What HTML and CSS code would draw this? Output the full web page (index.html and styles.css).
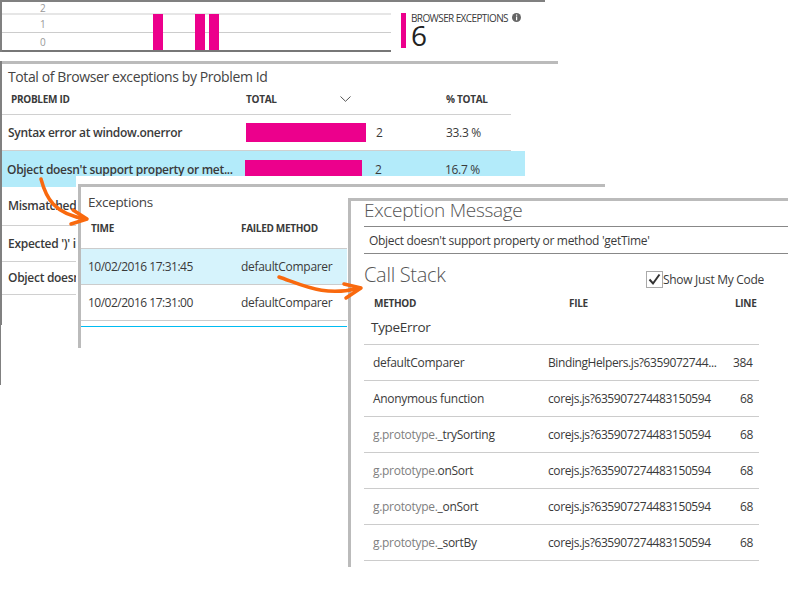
FILE: index.html
```html
<!DOCTYPE html>
<html>
    <head>
        <meta http-equiv=Content-Type content=text/html;charset=UTF-8>
        <title>Browser exceptions</title>
        <link rel="stylesheet" href="styles.css">
    </head>
    <body>
        <!-- chart blade -->
        <div class="window window-chart">
            <div class=chart>
                <div class="chart-row chart-row-top">2</div>
                <div class="chart-row chart-row-mid">1</div>
                <div class="chart-row chart-row-base">0</div>
                <span class=chart-bar style="left:151px"></span>
                <span class=chart-bar style="left:193px"></span>
                <span class=chart-bar style="left:207px"></span>
            </div>
            <div class=tile>
                <span class=tile-mark></span>
                <div>
                    <div class=tile-label>
                        BROWSER EXCEPTIONS
                        <svg class=info width=9 height=9 viewBox="0 0 9 9"><circle cx=4.5 cy=4.5 r=4.5 fill="#666"/><rect x=4 y=1.5 width=1.2 height=1.2 fill="#fff"/><rect x=4 y=3.5 width=1.2 height=3.8 fill="#fff"/></svg>
                    </div>
                    <div class=tile-value>6</div>
                </div>
            </div>
        </div>

        <!-- problems blade -->
        <div class="window window-problems">
            <span class=edge></span>
            <h2 class=blade-title>Total of Browser exceptions by Problem Id</h2>
            <div class="problem-row problem-head">
                <span class=head-first>PROBLEM ID</span>
                <span class=head-total>TOTAL
                    <svg width=11 height=6 viewBox="0 0 11 6"><polyline points="0.5,0.5 5.5,5.3 10.5,0.5" fill=none stroke="#555"/></svg>
                </span>
                <span></span>
                <span>% TOTAL</span>
            </div>
            <div class=problem-row>
                <span>Syntax error at window.onerror</span>
                <span class=bar style="width:120px"></span>
                <span class=num>2</span>
                <span class=num>33.3 %</span>
            </div>
            <div class="problem-row problem-selected">
                <span>Object doesn't support property or met...</span>
                <span class=bar style="width:117px"></span>
                <span class=num>2</span>
                <span class=num>16.7 %</span>
            </div>
            <div class="problem-row problem-tall"><span class=clipped>Mismatched</span></div>
            <div class=problem-row><span class=clipped>Expected ')' i</span></div>
            <div class="problem-row problem-short"><span class=clipped>Object doesn</span></div>
        </div>

        <!-- exceptions blade -->
        <div class="window window-exceptions">
            <div class=pane>
                <h2 class=pane-title>Exceptions</h2>
                <div class="exc-row exc-head"><span>TIME</span><span>FAILED METHOD</span></div>
                <div class="exc-row exc-selected"><span class=time>10/02/2016 17:31:45</span><span>defaultComparer</span></div>
                <div class=exc-row><span class=time>10/02/2016 17:31:00</span><span>defaultComparer</span></div>
                <div class=exc-end></div>
            </div>
        </div>

        <!-- details blade -->
        <div class="window window-details">
            <h1 class=detail-title>Exception Message</h1>
            <div class=message>Object doesn't support property or method 'getTime'</div>
            <div class=stack-top>
                <h1 class=stack-title>Call Stack</h1>
                <label class=just-mine>
                    <svg width=17 height=17 viewBox="0 0 17 17"><rect x=0.5 y=0.5 width=16 height=16 fill="#fff" stroke="#aaa"/><polyline points="3.5,8.5 7,12.5 13.5,3.5" fill=none stroke="#333" stroke-width=2 /></svg>
                    <span>Show Just My Code</span>
                </label>
            </div>
            <div class="stack-row stack-head"><span>METHOD</span><span>FILE</span><span>LINE</span></div>
            <div class=stack-error>TypeError</div>
            <div class=stack-row><span>defaultComparer</span><span class=file-name>BindingHelpers.js?6359072744...</span><span class=line-long>384</span></div>
            <div class=stack-row><span>Anonymous function</span><span class=file-name>corejs.js?635907274483150594</span><span>68</span></div>
            <div class=stack-row><span><i>g.prototype.</i>_trySorting</span><span class=file-name>corejs.js?635907274483150594</span><span>68</span></div>
            <div class=stack-row><span><i>g.prototype.</i>onSort</span><span class=file-name>corejs.js?635907274483150594</span><span>68</span></div>
            <div class=stack-row><span><i>g.prototype.</i>_onSort</span><span class=file-name>corejs.js?635907274483150594</span><span>68</span></div>
            <div class=stack-row><span><i>g.prototype.</i>_sortBy</span><span class=file-name>corejs.js?635907274483150594</span><span>68</span></div>
        </div>

        <!-- hand drawn arrows over the blades -->
        <svg class=arrows width=800 height=600 viewBox="0 0 800 600">
            <g fill=none stroke="#f9690e" stroke-width=3.5 stroke-linecap=round stroke-linejoin=round>
                <path d="M41 179 C46 198 54 214 86 219"/>
                <path d="M73 210 L87 219 L71 224"/>
                <path d="M279 277 C305 286 325 297 360 288"/>
                <path d="M344 284 L361 288 L346 298"/>
            </g>
        </svg>
    </body>
</html>
```

FILE: styles.css
```css
html, body {
    margin: 0;
    height: 100%;
    overflow: hidden;
    background: white;
}
body {
    font: 12px "Open Sans", "Noto Sans", sans-serif;
    letter-spacing: -0.3px;
    color: #3a3a3a;
}
h1, h2 {
    margin: 0;
    font-weight: normal;
}
.window {
    position: absolute;
    box-sizing: border-box;
    background: white;
}
.arrows {
    position: absolute;
    top: 0;
    left: 0;
}

/* chart blade */
.window-chart {
    top: 0;
    left: 0;
    width: 545px;
    height: 52px;
    border-top: 2px solid #808080;
    display: flex;
}
.chart {
    width: 391px;
    border-left: 2px solid #808080;
    box-sizing: border-box;
    position: relative;
    font-size: 10px;
    color: #999;
}
.chart-row {
    padding-left: 38px;
    box-sizing: border-box;
    display: flex;
    align-items: center;
}
.chart-row-top {
    height: 13px;
    border-bottom: 2px solid #e6e6e6;
}
.chart-row-mid {
    height: 18px;
    padding-top: 1px;
    border-bottom: 1px solid #ccc;
}
.chart-row-base {
    height: 19px;
    padding-top: 1px;
    border-bottom: 2px solid #777;
}
.chart-bar {
    position: absolute;
    top: 12px;
    width: 10px;
    height: 36px;
    background: #ec008c;
}
.tile {
    display: flex;
    gap: 5px;
    margin: 11px 0 0 10px;
}
.tile-mark {
    width: 5px;
    height: 35px;
    background: #ec008c;
}
.tile-label {
    margin-top: -1px;
    font-size: 10px;
    letter-spacing: -0.6px;
    line-height: 12px;
    white-space: nowrap;
}
.info {
    margin-left: 2px;
}
.tile-value {
    font-size: 28px;
    line-height: 22px;
    color: #222;
}

/* problems blade */
.window-problems {
    top: 61px;
    left: 0;
    width: 558px;
    height: 324px;
    border-top: 3px solid #bbb;
    border-left: 1px solid #808080;
}
.edge {
    position: absolute;
    top: -3px;
    left: -1px;
    width: 2px;
    height: 264px;
    background: #808080;
}
.blade-title {
    font-size: 14px;
    line-height: 26px;
    padding-left: 7px;
    letter-spacing: -0.4px;
    color: #444;
}
.problem-row {
    display: grid;
    grid-template-columns: 238px 130px 70px auto;
    align-items: center;
    box-sizing: border-box;
    width: 510px;
    height: 36px;
    padding-left: 7px;
    border-bottom: 1px solid #d0d0d0;
    font-weight: 600;
    white-space: nowrap;
    overflow: hidden;
}
.problem-head {
    height: 25px;
    padding: 0 0 6px 10px;
    grid-template-columns: 235px 130px 70px auto;
    font-size: 10px;
    font-weight: 700;
}
.head-total {
    display: flex;
    justify-content: space-between;
    align-items: center;
    padding-right: 4px;
    width: 105px;
}
.problem-selected {
    width: 524px;
    padding-left: 6px;
    height: 36px;
    background: #b3ebfa;
    border-bottom: none;
}
.problem-tall {
    height: 39px;
    padding-bottom: 2px;
}
.problem-short {
    height: 33px;
    padding-bottom: 2px;
}
.clipped {
    width: 68px;
    overflow: hidden;
}
.bar {
    height: 19px;
    background: #ec008c;
}
.num {
    font-weight: normal;
}

/* exceptions blade */
.window-exceptions {
    top: 176px;
    left: 76px;
    width: 529px;
    height: 172px;
    padding: 8px 0 0 2px;
}
.pane {
    height: 100%;
    box-sizing: border-box;
    border-top: 3px solid #bbb;
    border-left: 3px solid #bbb;
}
.pane-title {
    font-size: 13.5px;
    line-height: 30px;
    padding-left: 7px;
    color: #444;
}
.exc-row {
    display: grid;
    grid-template-columns: 153px auto;
    align-items: center;
    box-sizing: border-box;
    width: 266px;
    height: 36px;
    padding-left: 7px;
    border-bottom: 1px solid #ccc;
}
.exc-head {
    height: 32px;
    padding: 0 0 9px 10px;
    grid-template-columns: 150px auto;
    font-size: 10px;
    font-weight: 700;
}
.exc-selected {
    background: #d6f3fc;
}
.time {
    letter-spacing: -0.5px;
}
.exc-end {
    width: 266px;
    height: 1px;
    margin-top: 5px;
    background: #00bcf2;
}

/* details blade */
.window-details {
    top: 198px;
    left: 348px;
    width: 440px;
    height: 369px;
    border-top: 3px solid #bbb;
    border-left: 3px solid #bbb;
    padding-left: 13px;
    overflow: hidden;
}
.detail-title {
    font-size: 19px;
    font-weight: 300;
    line-height: 19px;
    height: 25px;
    color: #555;
    white-space: nowrap;
}
.message {
    box-sizing: border-box;
    height: 28px;
    line-height: 27px;
    padding-left: 5px;
    border-top: 1px solid #888;
    border-bottom: 1px solid #888;
}
.stack-top {
    display: flex;
    justify-content: space-between;
    height: 38px;
    width: 400px;
}
.stack-title {
    font-size: 20px;
    font-weight: 300;
    line-height: 42px;
    color: #555;
}
.just-mine {
    display: flex;
    align-items: center;
    height: 17px;
    margin-top: 17px;
    width: 118px;
    overflow: hidden;
    white-space: nowrap;
    flex: none;
}
.just-mine svg {
    flex: none;
}
.stack-row {
    display: grid;
    grid-template-columns: 175px 185px auto;
    align-items: center;
    box-sizing: border-box;
    width: 395px;
    height: 36px;
    padding-left: 9px;
    border-bottom: 1px solid #ccc;
}
.stack-row span:last-child {
    padding-left: 7px;
}
.stack-row span.line-long {
    padding-left: 0;
}
.stack-row i {
    font-style: normal;
    color: #808080;
}
.file-name {
    letter-spacing: -0.4px;
}
.stack-head {
    height: 22px;
    padding-left: 10px;
    grid-template-columns: 195px 166px auto;
    border-bottom: none;
    font-size: 10px;
    font-weight: 700;
}
.stack-head span:last-child {
    padding-left: 0;
}
.stack-error {
    width: 395px;
    height: 31px;
    line-height: 27px;
    box-sizing: border-box;
    padding-left: 7px;
    font-size: 13.5px;
    border-bottom: 1px solid #ccc;
}
```
